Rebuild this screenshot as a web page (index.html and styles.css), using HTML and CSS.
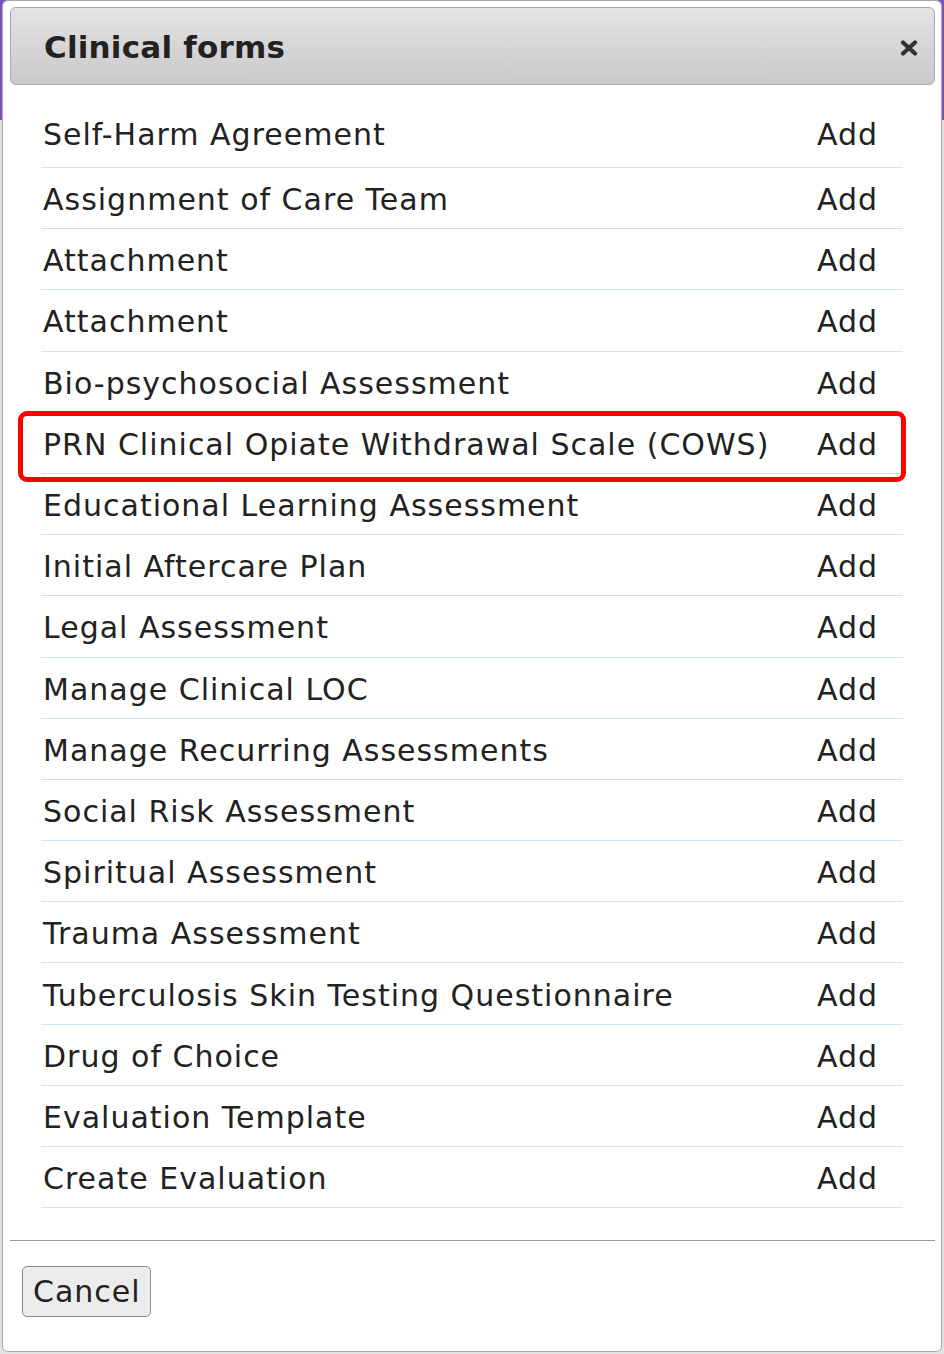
FILE: index.html
```html
<!DOCTYPE html>
<html lang="en">
<head>
<meta charset="utf-8">
<title>Clinical forms</title>
<link rel="stylesheet" href="styles.css">
</head>
<body>
<div class="page">
  <div class="dialog">
    <div class="titlebar">
      <span class="title">Clinical forms</span>
      <span class="close" aria-label="close">
        <svg width="18" height="16" viewBox="0 0 18 16"><path d="M3 2.5 L15 13.5 M15 2.5 L3 13.5" stroke="#333" stroke-width="4.2" stroke-linecap="round"/></svg>
      </span>
    </div>
    <div class="content">
      <div class="list">
        <div class="row"><span class="name">Self-Harm Agreement</span><span class="add">Add</span></div>
        <div class="row"><span class="name">Assignment of Care Team</span><span class="add">Add</span></div>
        <div class="row"><span class="name">Attachment</span><span class="add">Add</span></div>
        <div class="row"><span class="name">Attachment</span><span class="add">Add</span></div>
        <div class="row"><span class="name">Bio-psychosocial Assessment</span><span class="add">Add</span></div>
        <div class="row highlighted"><span class="name">PRN Clinical Opiate Withdrawal Scale (COWS)</span><span class="add">Add</span><span class="mark"></span></div>
        <div class="row"><span class="name">Educational Learning Assessment</span><span class="add">Add</span></div>
        <div class="row"><span class="name">Initial Aftercare Plan</span><span class="add">Add</span></div>
        <div class="row"><span class="name">Legal Assessment</span><span class="add">Add</span></div>
        <div class="row"><span class="name">Manage Clinical LOC</span><span class="add">Add</span></div>
        <div class="row"><span class="name">Manage Recurring Assessments</span><span class="add">Add</span></div>
        <div class="row"><span class="name">Social Risk Assessment</span><span class="add">Add</span></div>
        <div class="row"><span class="name">Spiritual Assessment</span><span class="add">Add</span></div>
        <div class="row"><span class="name">Trauma Assessment</span><span class="add">Add</span></div>
        <div class="row"><span class="name">Tuberculosis Skin Testing Questionnaire</span><span class="add">Add</span></div>
        <div class="row"><span class="name">Drug of Choice</span><span class="add">Add</span></div>
        <div class="row"><span class="name">Evaluation Template</span><span class="add">Add</span></div>
        <div class="row"><span class="name">Create Evaluation</span><span class="add">Add</span></div>
      </div>
    </div>
    <div class="buttonpane">
      <button class="cancel" type="button">Cancel</button>
    </div>
  </div>
</div>
</body>
</html>
```

FILE: styles.css
```css
html, body {
  margin: 0;
  padding: 0;
}
body {
  font-family: "DejaVu Sans", Verdana, sans-serif;
  color: #222;
  background: #e4e4e4;
}
.page {
  width: 944px;
  height: 1354px;
  box-sizing: border-box;
  padding: 0 2px;
  background: linear-gradient(to bottom, #7b52c4 0, #7b52c4 120px, #e2e2e2 120px, #e2e2e2 100%);
  overflow: hidden;
}
.dialog {
  width: 940px;
  height: 1352px;
  box-sizing: border-box;
  background: #fff;
  border: 1px solid #a8a8a8;
  border-radius: 6px;
  display: flex;
  flex-direction: column;
}
.titlebar {
  margin: 6px 6px 0 7px;
  height: 78px;
  box-sizing: border-box;
  border: 1px solid #aaa;
  border-radius: 6px;
  background: linear-gradient(to bottom, #e4e4e4 0%, #d6d6d6 50%, #c9c9c9 100%);
  display: flex;
  align-items: center;
  justify-content: space-between;
  padding: 4px 16px 0 33px;
}
.title {
  font-weight: bold;
  font-size: 31px;
  letter-spacing: 0.2px;
  color: #222;
  position: relative;
  top: -1px;
}
.close {
  display: flex;
  width: 18px;
  height: 16px;
}
.content {
  padding: 21px 38px 0 38px;
}
.list {
  display: flex;
  flex-direction: column;
}
.row {
  position: relative;
  display: flex;
  align-items: center;
  justify-content: space-between;
  height: 61.2px;
  box-sizing: border-box;
  border-bottom: 1px solid #cfe0f1;
  font-size: 30px;
  letter-spacing: 1px;
  padding: 4px 25px 0 2px;
}
.row:first-child {
  height: 62px;
  padding-top: 0;
  padding-bottom: 4px;
}
.name, .add {
  line-height: 36px;
  color: #222;
}
.mark {
  position: absolute;
  left: -23px;
  right: -3px;
  top: -2px;
  bottom: -9px;
  border: 5px solid #ff0000;
  border-radius: 9px;
  pointer-events: none;
}
.buttonpane {
  margin: 32px 6px 0 7px;
  border-top: 1px solid #9a9a9a;
  padding: 25px 12px;
}
.cancel {
  font-family: "DejaVu Sans", Verdana, sans-serif;
  font-size: 30px;
  letter-spacing: 1px;
  color: #222;
  background: #ececec;
  border: 1px solid #8a8a8a;
  border-radius: 5px;
  height: 51px;
  padding: 0 9px 0 10px;
  line-height: 1;
}
```
